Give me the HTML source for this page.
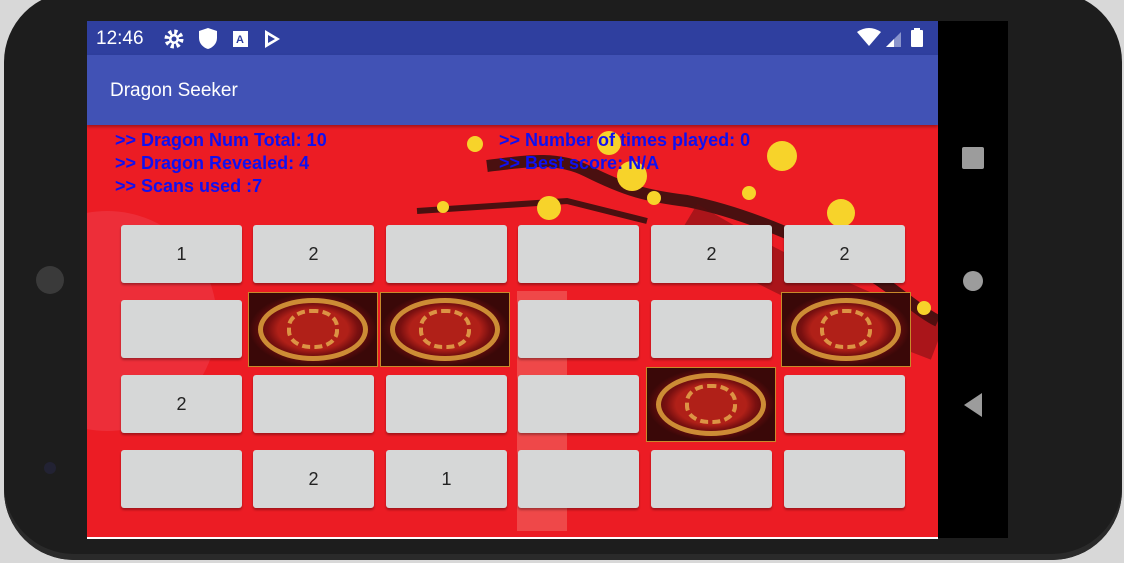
<!DOCTYPE html>
<html><head><meta charset="utf-8"><style>
*,*::before,*::after{margin:0;padding:0;box-sizing:border-box}
body{width:1124px;height:563px;background:#d8d8d8;position:relative;overflow:hidden;font-family:"Liberation Sans",sans-serif}
.phone{position:absolute;left:4px;top:-8px;width:1118px;height:568px;background:#1d1d1d;border-radius:70px;box-shadow:inset 0 -6px 0 #2a2a2a}
.screen{position:absolute;left:87px;top:21px;width:851px;height:517px;background:#ec1c24;overflow:hidden}
.status{position:absolute;left:0;top:0;width:851px;height:34px;background:#2f3f9f;color:#fff}
.tool{position:absolute;left:0;top:34px;width:851px;height:70px;background:#4152b5;box-shadow:0 2px 3px rgba(0,0,0,.3)}
.tool span{position:absolute;left:23px;top:25px;color:#fff;font-size:19px}
.nav{position:absolute;left:938px;top:21px;width:70px;height:517px;background:#000}
.info{position:absolute;color:#1010f0;font-weight:bold;font-size:18px;line-height:23px}
.b{position:absolute;width:121px;height:58px;background:#d6d7d7;border-radius:3px;box-shadow:0 2px 2px rgba(0,0,0,.3);font-size:18px;color:#222;text-align:center;line-height:58px}
.d{position:absolute;width:130px;height:75px;background:radial-gradient(ellipse 50% 50% at 50% 50%,#b02018 0 55%,#7a1010 70%,#3a0808 100%);border:1px solid #c8892a;overflow:hidden}
.d::before{content:"";position:absolute;left:9px;top:5px;width:110px;height:63px;border-radius:50%;border:5px solid #d89a3a;opacity:.9}
.d::after{content:"";position:absolute;left:38px;top:16px;width:52px;height:40px;border-radius:45%;border:4px dashed #e8b050;opacity:.8}
.fl{position:absolute;width:16px;height:16px;border-radius:50%;background:#f7d32a}
</style></head><body>
<div class="phone"></div>
<div style="position:absolute;left:36px;top:266px;width:28px;height:28px;border-radius:50%;background:#3a3a3a"></div>
<div style="position:absolute;left:44px;top:462px;width:12px;height:12px;border-radius:50%;background:#223"></div>
<div class="screen">
<svg width="851" height="517" style="position:absolute;left:0;top:0">
<path d="M400 145 C440 140 470 135 500 150 C540 170 560 175 600 180 C650 190 700 210 760 240 C800 260 830 290 851 300" stroke="#4a1010" stroke-width="12" fill="none"/>
<path d="M330 190 L480 180 L560 200" stroke="#4a1010" stroke-width="6" fill="none"/>
<path d="M600 200 C650 230 720 270 851 320" stroke="#5a0e10" stroke-width="40" fill="none" opacity=".45"/>
<circle cx="20" cy="300" r="110" fill="#f05060" opacity=".35"/>
<rect x="430" y="270" width="50" height="240" fill="#f6b0a0" opacity=".3"/>
</svg>
<div class="fl" style="left:380px;top:115px"></div><div class="fl" style="left:450px;top:175px;width:24px;height:24px"></div>
<div class="fl" style="left:510px;top:110px;width:24px;height:24px"></div><div class="fl" style="left:530px;top:140px;width:30px;height:30px"></div>
<div class="fl" style="left:680px;top:120px;width:30px;height:30px"></div><div class="fl" style="left:740px;top:178px;width:28px;height:28px"></div>
<div class="fl" style="left:560px;top:170px;width:14px;height:14px"></div><div class="fl" style="left:655px;top:165px;width:14px;height:14px"></div>
<div class="fl" style="left:350px;top:180px;width:12px;height:12px"></div><div class="fl" style="left:830px;top:280px;width:14px;height:14px"></div>
<div class="status">
<span style="position:absolute;left:9px;top:7px;font-size:19px">12:46</span>
<svg style="position:absolute;left:76px;top:7px" width="200" height="22">
<circle cx="11" cy="11" r="7" fill="none" stroke="#fff" stroke-width="5" stroke-dasharray="3 2.5"/><circle cx="11" cy="11" r="5" fill="#fff"/><circle cx="11" cy="11" r="2.5" fill="#2f3f9f"/>
<path d="M36 3 L45 0 L54 3 L54 10 C54 16 49 20 45 21 C41 20 36 16 36 10Z" fill="#fff"/>
<rect x="70" y="3" width="15" height="16" fill="#fff"/><text x="73" y="15" font-size="11" font-weight="bold" fill="#2f3f9f" font-family="Liberation Sans">A</text>
<path d="M102 2 L117 11 L102 20 Z M105 7 L105 15 L112 11Z" fill="#fff" fill-rule="evenodd"/>
</svg>
<svg style="position:absolute;left:768px;top:6px" width="80" height="24">
<path d="M2 5 Q14 -3 26 5 L14 19Z" fill="#fff"/>
<path d="M31 20 L46 5 L46 20Z" fill="#8a94cc"/><path d="M31 20 L39 12 L39 20Z" fill="#fff"/>
<rect x="56" y="3" width="12" height="17" rx="1" fill="#fff"/><rect x="59" y="1" width="6" height="3" fill="#fff"/>
</svg>
</div>
<div class="tool"><span>Dragon Seeker</span></div>
<div class="info" style="left:28px;top:108px">&gt;&gt; Dragon Num Total: 10<br>&gt;&gt; Dragon Revealed: 4<br>&gt;&gt; Scans used :7</div>
<div class="info" style="left:412px;top:108px">&gt;&gt; Number of times played: 0<br>&gt;&gt; Best score: N/A</div>
</div>
<div class="nav">
<div style="position:absolute;left:24px;top:126px;width:22px;height:22px;background:#9c9c9c;border-radius:2px"></div>
<div style="position:absolute;left:25px;top:250px;width:20px;height:20px;background:#9c9c9c;border-radius:50%"></div>
<svg style="position:absolute;left:24px;top:371px" width="24" height="26"><path d="M20 1 L20 25 L2 13Z" fill="#9c9c9c"/></svg>
</div>
<div class="b" style="left:121px;top:225px">1</div><div class="b" style="left:253px;top:225px">2</div><div class="b" style="left:386px;top:225px"></div><div class="b" style="left:518px;top:225px"></div><div class="b" style="left:651px;top:225px">2</div><div class="b" style="left:784px;top:225px">2</div>
<div class="b" style="left:121px;top:300px"></div><div class="d" style="left:248px;top:292px"></div><div class="d" style="left:380px;top:292px"></div><div class="b" style="left:518px;top:300px"></div><div class="b" style="left:651px;top:300px"></div><div class="d" style="left:781px;top:292px"></div>
<div class="b" style="left:121px;top:375px">2</div><div class="b" style="left:253px;top:375px"></div><div class="b" style="left:386px;top:375px"></div><div class="b" style="left:518px;top:375px"></div><div class="d" style="left:646px;top:367px"></div><div class="b" style="left:784px;top:375px"></div>
<div class="b" style="left:121px;top:450px"></div><div class="b" style="left:253px;top:450px">2</div><div class="b" style="left:386px;top:450px">1</div><div class="b" style="left:518px;top:450px"></div><div class="b" style="left:651px;top:450px"></div><div class="b" style="left:784px;top:450px"></div>
<div style="position:absolute;left:87px;top:537px;width:851px;height:2px;background:#fff"></div>
</body></html>
